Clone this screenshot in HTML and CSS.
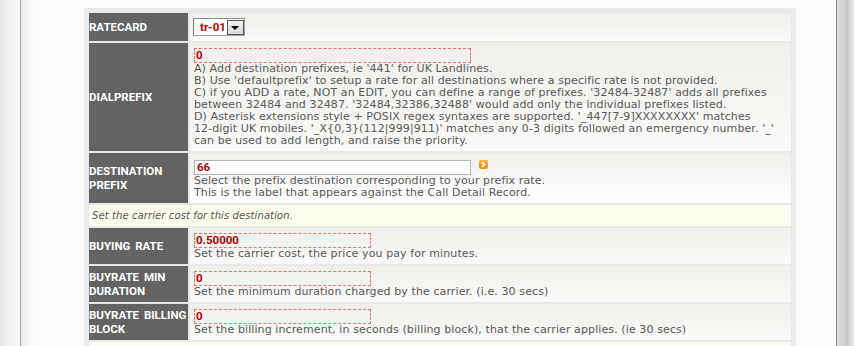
FILE: index.html
```html
<!DOCTYPE html>
<html>
<head>
<meta charset="utf-8">
<link rel="stylesheet" href="styles.css">
</head>
<body>
<div class="page">
  <div class="shade-left"></div>
  <div class="content">
    <div class="form-box">
      <table class="form">
        <tr class="r-ratecard">
          <th>RATECARD</th>
          <td>
            <div class="select"><span class="select-val">tr-01</span><span class="select-btn"><span class="tri"></span></span></div>
          </td>
        </tr>
        <tr class="r-dial">
          <th>DIALPREFIX</th>
          <td>
            <div class="field wide">0</div>
            <div class="desc">A) Add destination prefixes, ie '441' for UK Landlines.<br>
B) Use 'defaultprefix' to setup a rate for all destinations where a specific rate is not provided.<br>
C) if you ADD a rate, NOT an EDIT, you can define a range of prefixes. '32484-32487' adds all prefixes<br>between 32484 and 32487. '32484,32386,32488' would add only the individual prefixes listed.<br>
D) Asterisk extensions style + POSIX regex syntaxes are supported. '_447[7-9]XXXXXXXX' matches<br>12-digit UK mobiles. '_X{0,3}(112|999|911)' matches any 0-3 digits followed an emergency number. '_'<br>can be used to add length, and raise the priority.</div>
          </td>
        </tr>
        <tr class="r-dest">
          <th>DESTINATION PREFIX</th>
          <td class="light">
            <div class="dest-line"><div class="field solid">66</div><span class="go"><svg width="9" height="9" viewBox="0 0 9 9"><path d="M3.2 2.2 L5.6 4.5 L3.2 6.8" fill="none" stroke="#fff" stroke-width="1.6"/></svg></span></div>
            <div class="desc">Select the prefix destination corresponding to your prefix rate.<br>This is the label that appears against the Call Detail Record.</div>
          </td>
        </tr>
        <tr class="r-note">
          <td colspan="2" class="note">Set the carrier cost for this destination.</td>
        </tr>
        <tr class="r-std">
          <th>BUYING RATE</th>
          <td>
            <div class="field short">0.50000</div>
            <div class="desc">Set the carrier cost, the price you pay for minutes.</div>
          </td>
        </tr>
        <tr class="r-std">
          <th>BUYRATE MIN DURATION</th>
          <td>
            <div class="field short">0</div>
            <div class="desc">Set the minimum duration charged by the carrier. (i.e. 30 secs)</div>
          </td>
        </tr>
        <tr class="r-std">
          <th>BUYRATE BILLING BLOCK</th>
          <td>
            <div class="field short">0</div>
            <div class="desc">Set the billing increment, in seconds (billing block), that the carrier applies. (ie 30 secs)</div>
          </td>
        </tr>
        <tr class="r-note">
          <td colspan="2" class="note">&nbsp;</td>
        </tr>
      </table>
    </div>
  </div>
  <div class="shade-right"></div>
</div>
</body>
</html>
```
FILE: styles.css
```css
html, body {
  margin: 0;
  padding: 0;
  height: 100%;
  overflow: hidden;
}
body {
  background: #fafafa;
  font-family: "DejaVu Sans", Verdana, sans-serif;
}
.page {
  display: flex;
  height: 346px;
  overflow: hidden;
}
.shade-left {
  width: 20px;
  flex: none;
  background: linear-gradient(to right, #e6e6e6, #f4f4f4 60%, #f7f7f7);
  border-right: 1px solid #a9a9a9;
}
.content {
  flex: none;
  width: 815px;
  background: linear-gradient(to right, #ececec, #f8f8f8 8px, #fbfbfb 16px);
  padding-top: 8px;
  box-sizing: border-box;
}
.form-box {
  margin-left: 63px;
  width: 712px;
  box-sizing: border-box;
  background: #e9e9e9;
  padding: 3px 3px 0 3px;
}
.form {
  width: 706px;
  border-spacing: 2px;
  table-layout: fixed;
}
.form th {
  width: 99px;
  padding: 0;
  background: #636363;
  color: #fff;
  font-family: Roboto, "DejaVu Sans", sans-serif;
  font-weight: bold;
  font-size: 11.5px;
  line-height: 14px;
  word-spacing: 2px;
  text-align: left;
  vertical-align: middle;
}
.form td {
  padding: 0 0 0 4px;
  vertical-align: middle;
  background: linear-gradient(to bottom, #efefec, #f9f9f7);
  color: #585858;
  font-size: 11px;
  line-height: 12px;
  letter-spacing: 0.1px;
}
.form td.light {
  background: linear-gradient(to bottom, #efefec, #ffffff);
}
.r-ratecard th, .r-ratecard td { height: 28px; }
.r-dial th, .r-dial td { height: 108px; }
.r-dest th, .r-dest td { height: 50px; }
.r-note td { height: 21px; }
.r-std th, .r-std td { height: 36px; }
.form td.note {
  background: #fcfcee;
  font-style: italic;
  font-size: 10px;
  letter-spacing: 0.1px;
  color: #555;
  padding-left: 3px;
}
.desc {
  white-space: nowrap;
}
.field {
  box-sizing: border-box;
  height: 15px;
  border: 1px dashed #f07070;
  color: #b00000;
  font-family: Roboto, "DejaVu Sans", sans-serif;
  font-weight: bold;
  font-size: 11.5px;
  line-height: 13px;
  letter-spacing: 0;
  padding-left: 1px;
  background: transparent;
}
.field.wide { width: 277px; }
.field.short { width: 177px; }
.field.solid {
  border: 1px solid #b4b4b4;
  background: #fff;
  width: 277px;
  padding-left: 2px;
}
.dest-line {
  display: flex;
  align-items: flex-start;
  gap: 8px;
  margin-top: 2px;
}
.go {
  width: 9px;
  height: 9px;
  border-radius: 2px;
  background: linear-gradient(to bottom, #fbb33a, #ec8a10);
  display: flex;
}
.select {
  display: inline-flex;
  align-items: center;
  height: 18px;
  box-sizing: border-box;
  border: 1px solid #a0a0a0;
  border-top-color: #8d8d8d;
  border-left-color: #7a7a7a;
  background: #fff;
  padding: 0 0 0 6px;
  margin-left: -1px;
}
.select-val {
  color: #b00000;
  font-family: Roboto, "DejaVu Sans", sans-serif;
  font-weight: bold;
  font-size: 11.5px;
  line-height: 14px;
  letter-spacing: 0;
}
.select-btn {
  width: 17px;
  height: 15px;
  box-sizing: border-box;
  border: 1px solid #555;
  background: linear-gradient(to bottom, #f2f2f2, #d8d8d8);
  display: flex;
  align-items: center;
  justify-content: center;
  margin-left: 1px;
}
.tri {
  width: 0;
  height: 0;
  border-left: 4px solid transparent;
  border-right: 4px solid transparent;
  border-top: 4px solid #000;
  margin-top: 2px;
}
.shade-right {
  flex: none;
  width: 19px;
  border-left: 1px solid #8c8c8c;
  background: linear-gradient(to right, #dcdcdc, #d4d4d4 35%, #c9c9c9 55%, #dedede 75%, #ececec);
}
```
